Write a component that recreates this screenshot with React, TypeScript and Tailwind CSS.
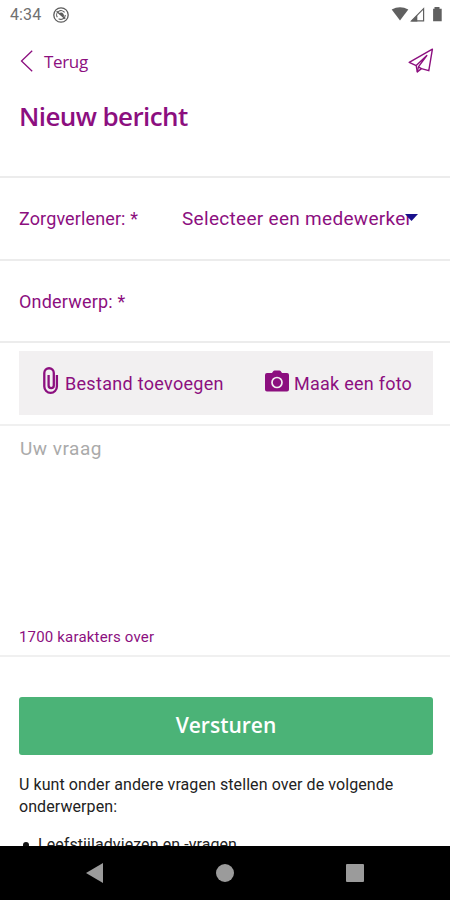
import type { ReactNode } from 'react';

function StatusBar() {
  return (
    <div className="flex h-[30px] items-center pl-[10px] pr-[7px] text-[#707070]">
      <span className="w-[43px] text-[16px] leading-none tracking-[0.1px]">4:34</span>
      <svg className="mt-[-1px] h-4 w-4" viewBox="0 0 16 16" fill="none" stroke="#5c5c5c">
        <circle cx="8" cy="8" r="7.2" strokeWidth="1.3" />
        <path d="M4.3 10.3A4.4 4.4 0 0 1 11.6 5.4M5.6 11.7A4.4 4.4 0 0 0 12.3 8" strokeWidth="1.1" />
        <path d="M3.6 4.2 12.2 11.8" strokeWidth="1.3" />
        <path d="M6 6.2C8.5 4.4 11.4 6 11 9.8L8.6 8.8Z" fill="#5c5c5c" stroke="none" />
      </svg>
      <svg className="ml-auto h-4 w-[52px]" viewBox="391 7 52 16">
        <path d="M391.7 9.6Q400 4.8 408.3 9.6L400 20.5Z" fill="#606060" />
        <path d="M411.5 20.9 423.6 8.6V20.9Z" fill="none" stroke="#606060" strokeWidth="1.2" />
        <path d="M411 21.4 417.3 14.9V21.4Z" fill="#606060" />
        <path d="M434.5 7h5v1.7h2.2V21.3h-8.6V8.7h1.4Z" fill="#606060" />
      </svg>
    </div>
  );
}

function Header() {
  return (
    <header className="flex h-[62px] items-center pl-[20px] pr-[16px]">
      <svg className="h-[22px] w-[14px]" viewBox="0 0 14 22" fill="none" stroke="#8c0f7f" strokeWidth="1.3">
        <path d="M12.2 .7 1.5 11 12.2 21.3" />
      </svg>
      <span className="ml-[10px] mt-px font-['Open_Sans',sans-serif] text-[17px] tracking-[-0.35px]">Terug</span>
      <svg
        className="ml-auto h-[26px] w-[26px]"
        viewBox="0 0 26 26"
        fill="none"
        stroke="#8c0f7f"
        strokeWidth="1.4"
        strokeLinejoin="round"
      >
        <path d="M24.4 1.2 1.2 14.3 8.2 17.6 9.3 24 13.4 20.6 20.8 22.7Z" />
        <path d="M8.2 17.6 18.8 7.6 10.4 18.8 9.3 24M10.4 18.8 13.4 20.6" />
      </svg>
    </header>
  );
}

function Row({ children }: { children: ReactNode }) {
  return (
    <div className="flex h-[82.5px] shrink-0 items-center border-b-2 border-[#ececec] pl-[19px] pt-px">{children}</div>
  );
}

function Attachments() {
  return (
    <div className="h-[83px] shrink-0 border-b-2 border-[#f0f0f0] pl-[19px] pr-[17px] pt-[7.5px]">
      <div className="flex h-[64px] items-center bg-[#f2f0f1] pl-[24px] text-[18px]">
        <svg className="mt-[-4px] h-[28px] w-[16px]" viewBox="0 0 16 28" fill="none" stroke="#8c0f7f" strokeWidth="2.3">
          <path d="M13.9 8V19.6A6.3 6.3 0 0 1 1.3 19.6V6A4.75 4.75 0 0 1 10.8 6V18.5A2.5 2.5 0 0 1 5.6 18.5V8" />
        </svg>
        <span className="ml-[6px] mt-[2px] w-[160px] whitespace-nowrap tracking-[0.3px]">Bestand toevoegen</span>
        <svg className="ml-[40px] mt-[-4px] h-[22px] w-[24px]" viewBox="0 0 24 22">
          <path
            d="M2 3H7L8.2 1.3Q8.7.5 9.6.5H14.4Q15.3.5 15.8 1.3L17 3H22Q24 3 24 5V19.6Q24 21.5 22 21.5H2Q0 21.5 0 19.6V5Q0 3 2 3Z"
            fill="#8c0f7f"
          />
          <circle cx="12" cy="12.5" r="5" fill="none" stroke="#f2f0f1" strokeWidth="1.7" />
        </svg>
        <span className="ml-[5px] mt-[2px] whitespace-nowrap tracking-[0.25px]">Maak een foto</span>
      </div>
    </div>
  );
}

function NavigationBar() {
  return (
    <nav className="flex h-[54px] shrink-0 items-center justify-between bg-black pl-[86px] pr-[86px]">
      <svg className="h-5 w-[17px]" viewBox="0 0 17 20">
        <path d="M0 10 17 0V20Z" fill="#9b9b9b" />
      </svg>
      <div className="ml-[1px] h-[18px] w-[18px] rounded-full bg-[#9b9b9b]" />
      <div className="h-[18px] w-[18px] rounded-[1px] bg-[#9b9b9b]" />
    </nav>
  );
}

export default function App() {
  return (
    <div className="flex h-[900px] w-[450px] flex-col overflow-hidden bg-white font-[Roboto,sans-serif] text-[#8c0f7f]">
      <StatusBar />
      <Header />
      <main className="flex h-[754px] flex-col overflow-hidden">
        <div className="h-[86px] shrink-0 border-b-2 border-[#ececec] pl-[19px] pt-[6px]">
          <h1 className="font-['Open_Sans',sans-serif] text-[26px] font-semibold leading-[36px] tracking-[-0.6px]">
            Nieuw bericht
          </h1>
        </div>
        <Row>
          <span className="w-[163px] text-[18px] tracking-[0.12px]">Zorgverlener: *</span>
          <span className="mt-px whitespace-nowrap text-[19px] tracking-[0.3px]">Selecteer een medewerker</span>
          <svg className="-ml-[7px] mt-[-2px] h-[7px] w-[13px]" viewBox="0 0 13 7">
            <path d="M0 0H13L6.5 7Z" fill="#19108c" />
          </svg>
        </Row>
        <Row>
          <span className="text-[18px] tracking-[0.2px]">Onderwerp: *</span>
        </Row>
        <Attachments />
        <section className="flex h-[231px] shrink-0 flex-col justify-between border-b-2 border-[#f0f0f0] pb-[8px] pl-[20px] pt-[11px]">
          <span className="text-[19px] leading-[24px] tracking-[0.5px] text-[#aaa]">Uw vraag</span>
          <span className="-ml-px text-[15px] leading-[20px] tracking-[0.18px]">1700 karakters over</span>
        </section>
        <div className="shrink-0 pl-[19px] pr-[17px] pt-[40px]">
          <button className="flex h-[58px] w-full items-center justify-center rounded-[3px] bg-[#4bb377] font-['Open_Sans',sans-serif] text-[21px] font-semibold text-white">
            Versturen
          </button>
          <p className="mt-[19px] whitespace-nowrap text-[16px] leading-[22px] tracking-[0.08px] text-[#222]">
            U kunt onder andere vragen stellen over de volgende
            <br />
            onderwerpen:
          </p>
          <ul className="mt-[16px] text-[16px] leading-[22px] tracking-[0.08px] text-[#222]">
            <li className="flex items-center">
              <span className="ml-[4px] mr-[9px] h-[6px] w-[6px] rounded-full bg-[#111]" />
              <span>Leefstijladviezen en -vragen</span>
            </li>
          </ul>
        </div>
      </main>
      <NavigationBar />
    </div>
  );
}
